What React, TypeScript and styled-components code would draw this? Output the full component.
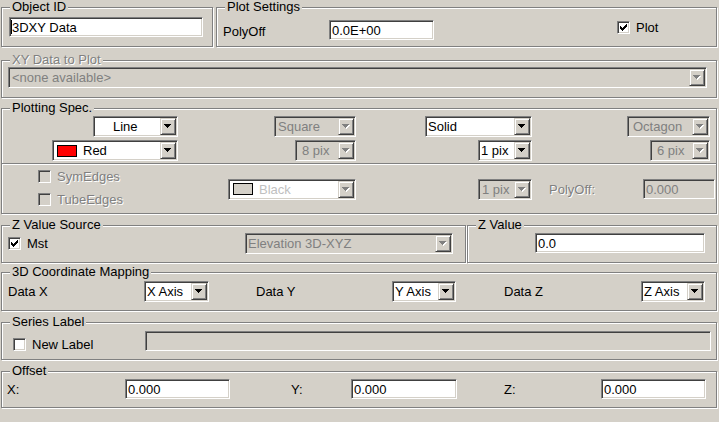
import * as React from "react";
import styled, { createGlobalStyle, css } from "styled-components";

const GlobalStyle = createGlobalStyle`
  html, body {
    margin: 0;
    padding: 0;
    background: #d4d0c8;
  }
  body {
    font-family: "Liberation Sans", Arial, sans-serif;
    font-size: 13px;
    color: #000;
  }
  * {
    box-sizing: border-box;
  }
`;

const sunken = css`
  border: 1px solid;
  border-color: #808080 #fff #fff #808080;
  box-shadow: inset 1px 1px 0 #404040, inset -1px -1px 0 #d4d0c8;
`;

const embossed = css`
  color: #808080;
  text-shadow: 1px 1px 0 #fff;
`;

const Dialog = styled.div`
  width: 719px;
  height: 422px;
  padding: 7px 0 0 1px;
  display: flex;
  flex-direction: column;
  overflow: hidden;
`;

const GroupRow = styled.div<{ $gap: number; $mt?: number }>`
  display: flex;
  gap: ${(p) => p.$gap}px;
  margin-top: ${(p) => p.$mt ?? 0}px;
`;

const Group = styled.div<{
  $w?: number;
  $h: number;
  $mt?: number;
  $pt?: number;
  $pl?: number;
  $pr?: number;
}>`
  position: relative;
  flex: none;
  width: ${(p) => p.$w ?? 716}px;
  height: ${(p) => p.$h}px;
  margin-top: ${(p) => p.$mt ?? 0}px;
  padding: ${(p) => p.$pt ?? 0}px ${(p) => p.$pr ?? 0}px 0 ${(p) => p.$pl ?? 0}px;
  border: 1px solid #808080;
  box-shadow: inset 1px 1px 0 #fff, 1px 1px 0 #fff;
  display: flex;
  flex-direction: column;
`;

const Title = styled.span<{ $disabled?: boolean }>`
  position: absolute;
  top: -8px;
  left: 8px;
  padding: 0 2px;
  line-height: 14px;
  background: #d4d0c8;
  white-space: nowrap;
  ${(p) => p.$disabled && embossed}
`;

const Line = styled.div<{ $h?: number; $mt?: number; $top?: boolean }>`
  display: flex;
  align-items: ${(p) => (p.$top ? "flex-start" : "center")};
  height: ${(p) => p.$h ?? 21}px;
  margin-top: ${(p) => p.$mt ?? 0}px;
  flex: none;
`;

const Cell = styled.div<{ $w: number }>`
  width: ${(p) => p.$w}px;
  flex: none;
  display: flex;
  justify-content: flex-end;
`;

const Label = styled.span<{ $w?: number; $ml?: number; $mt?: number; $disabled?: boolean }>`
  flex: none;
  width: ${(p) => (p.$w ? `${p.$w}px` : "auto")};
  margin-left: ${(p) => p.$ml ?? 0}px;
  margin-top: ${(p) => p.$mt ?? 0}px;
  line-height: 15px;
  white-space: nowrap;
  ${(p) => p.$disabled && embossed}
`;

const Edit = styled.div<{ $w: number; $ml?: string; $disabled?: boolean }>`
  ${sunken};
  width: ${(p) => p.$w}px;
  height: 20px;
  flex: none;
  margin-left: ${(p) => p.$ml ?? "0"};
  padding-left: 2px;
  display: flex;
  align-items: center;
  white-space: nowrap;
  overflow: hidden;
  background: ${(p) => (p.$disabled ? "#d4d0c8" : "#fff")};
  color: ${(p) => (p.$disabled ? "#808080" : "#000")};
`;

const Caret = styled.span`
  width: 1px;
  height: 14px;
  margin-left: -1px;
  background: #000;
  flex: none;
`;

const ComboBox = styled.div<{ $w: number; $ml?: string }>`
  ${sunken};
  width: ${(p) => p.$w}px;
  height: 21px;
  flex: none;
  margin-left: ${(p) => p.$ml ?? "0"};
  padding: 1px;
  display: flex;
`;

const ComboField = styled.div<{ $bg: string; $color: string; $pad: number }>`
  flex: 1;
  min-width: 0;
  display: flex;
  align-items: center;
  padding-left: ${(p) => p.$pad}px;
  background: ${(p) => p.$bg};
  color: ${(p) => p.$color};
  white-space: nowrap;
  overflow: hidden;
`;

const DropButton = styled.div`
  width: 16px;
  flex: none;
  display: flex;
  align-items: center;
  justify-content: center;
  background: #d4d0c8;
  border: 1px solid;
  border-color: #d4d0c8 #404040 #404040 #d4d0c8;
  box-shadow: inset 1px 1px 0 #fff, inset -1px -1px 0 #808080;
`;

const Swatch = styled.span<{ $fill: string; $edge: string }>`
  width: 20px;
  height: 12px;
  flex: none;
  margin: 0 6px 0 2px;
  background: ${(p) => p.$fill};
  border: 1px solid ${(p) => p.$edge};
`;

const CheckItem = styled.div<{ $mt?: number; $ml?: number; $h?: number }>`
  display: flex;
  align-items: center;
  gap: 6px;
  flex: none;
  height: ${(p) => (p.$h ? `${p.$h}px` : "auto")};
  margin-top: ${(p) => p.$mt ?? 0}px;
  margin-left: ${(p) => p.$ml ?? 0}px;
  line-height: 15px;
`;

const Box = styled.span<{ $disabled?: boolean }>`
  ${sunken};
  width: 13px;
  height: 13px;
  flex: none;
  display: flex;
  align-items: center;
  justify-content: center;
  background: ${(p) => (p.$disabled ? "#d4d0c8" : "#fff")};
`;

const Divider = styled.div<{ $mt: number }>`
  height: 2px;
  flex: none;
  margin-top: ${(p) => p.$mt}px;
  border-top: 1px solid #808080;
  border-bottom: 1px solid #fff;
`;

const LowerSpec = styled.div`
  display: flex;
  align-items: center;
  height: 48px;
`;

const CheckColumn = styled.div`
  width: 226px;
  flex: none;
  align-self: flex-start;
  padding-left: 36px;
  display: flex;
  flex-direction: column;
`;

const Spacer = styled.div<{ $w: number }>`
  width: ${(p) => p.$w}px;
  flex: none;
`;

function Arrow({ disabled }: { disabled?: boolean }) {
  return (
    <svg width="8" height="5" viewBox="0 0 8 5" shapeRendering="crispEdges">
      {disabled && (
        <path d="M1 1h7v1H1z M2 2h5v1H2z M3 3h3v1H3z M4 4h1v1H4z" fill="#fff" />
      )}
      <path
        d="M0 0h7v1H0z M1 1h5v1H1z M2 2h3v1H2z M3 3h1v1H3z"
        fill={disabled ? "#808080" : "#000"}
      />
    </svg>
  );
}

function CheckMark() {
  return (
    <svg width="7" height="7" viewBox="0 0 7 7" shapeRendering="crispEdges">
      <path
        d="M6 0h1v1H6z M5 1h2v1H5z M0 2h1v1H0z M4 2h3v1H4z M0 3h2v1H0z M3 3h3v1H3z M0 4h5v1H0z M1 5h3v1H1z M2 6h1v1H2z"
        fill="#000"
      />
    </svg>
  );
}

interface ComboProps {
  w: number;
  text: string;
  ml?: string;
  pad?: number;
  disabled?: boolean;
  white?: boolean;
  swatch?: { fill: string; edge: string };
}

function Combo({ w, text, ml, pad = 1, disabled, white, swatch }: ComboProps) {
  const bg = disabled && !white ? "#d4d0c8" : "#fff";
  const color = disabled ? (white ? "#c0c0c0" : "#808080") : "#000";
  return (
    <ComboBox $w={w} $ml={ml}>
      <ComboField $bg={bg} $color={color} $pad={pad}>
        {swatch && <Swatch $fill={swatch.fill} $edge={swatch.edge} />}
        {text}
      </ComboField>
      <DropButton>
        <Arrow disabled={disabled} />
      </DropButton>
    </ComboBox>
  );
}

interface CheckProps {
  label: string;
  checked?: boolean;
  disabled?: boolean;
  mt?: number;
  ml?: number;
  h?: number;
}

function Check({ label, checked, disabled, mt, ml, h }: CheckProps) {
  return (
    <CheckItem $mt={mt} $ml={ml} $h={h}>
      <Box $disabled={disabled}>{checked && <CheckMark />}</Box>
      <Label $disabled={disabled}>{label}</Label>
    </CheckItem>
  );
}

export default function App() {
  return (
    <>
      <GlobalStyle />
      <Dialog>
        <GroupRow $gap={3}>
          <Group $w={212} $h={40} $pt={9} $pl={7}>
            <Title>Object ID</Title>
            <Edit $w={194}>
              <Caret />
              3DXY Data
            </Edit>
          </Group>
          <Group $w={501} $h={40} $pt={12} $pl={6}>
            <Title>Plot Settings</Title>
            <Line $h={20} $top>
              <Label $w={106} $mt={4}>
                PolyOff
              </Label>
              <Edit $w={105}>0.0E+00</Edit>
              <Check label="Plot" checked ml={183} />
            </Line>
          </Group>
        </GroupRow>

        <Group $h={38} $mt={13} $pt={6} $pl={6}>
          <Title $disabled>XY Data to Plot</Title>
          <Combo w={699} text="<none available>" pad={2} disabled />
        </Group>

        <Group $h={106} $mt={10} $pt={7}>
          <Title>Plotting Spec.</Title>
          <Line>
            <Cell $w={176}>
              <Combo w={85} text="Line" pad={18} />
            </Cell>
            <Cell $w={178}>
              <Combo w={82} text="Square" pad={2} disabled />
            </Cell>
            <Cell $w={176}>
              <Combo w={107} text="Solid" />
            </Cell>
            <Cell $w={178}>
              <Combo w={83} text="Octagon" pad={4} disabled />
            </Cell>
          </Line>
          <Line $mt={3}>
            <Cell $w={176}>
              <Combo w={126} text="Red" swatch={{ fill: "#ff0000", edge: "#000" }} />
            </Cell>
            <Cell $w={178}>
              <Combo w={61} text="8 pix" pad={5} disabled />
            </Cell>
            <Cell $w={176}>
              <Combo w={54} text="1 pix" />
            </Cell>
            <Cell $w={178}>
              <Combo w={60} text="6 pix" pad={5} disabled />
            </Cell>
          </Line>
          <Divider $mt={2} />
          <LowerSpec>
            <CheckColumn>
              <Check label="SymEdges" disabled h={23} />
              <Check label="TubeEdges" disabled h={23} />
            </CheckColumn>
            <Combo
              w={128}
              text="Black"
              pad={1}
              disabled
              white
              swatch={{ fill: "#d4d0c8", edge: "#000" }}
            />
            <Spacer $w={122} />
            <Combo w={54} text="1 pix" pad={2} disabled />
            <Label $w={94} $ml={17} $disabled>
              PolyOff:
            </Label>
            <Edit $w={72} $disabled>
              0.000
            </Edit>
          </LowerSpec>
        </Group>

        <GroupRow $gap={1} $mt={11}>
          <Group $w={465} $h={38} $pt={7} $pl={6} $pr={12}>
            <Title>Z Value Source</Title>
            <Line>
              <Check label="Mst" checked />
              <Combo w={208} text="Elevation 3D-XYZ" disabled ml="auto" />
            </Line>
          </Group>
          <Group $w={250} $h={38} $pt={7} $pl={67}>
            <Title>Z Value</Title>
            <Edit $w={170}>0.0</Edit>
          </Group>
        </GroupRow>

        <Group $h={39} $mt={9} $pt={8} $pl={6}>
          <Title>3D Coordinate Mapping</Title>
          <Line>
            <Label $w={136}>Data X</Label>
            <Combo w={65} text="X Axis" />
            <Label $w={136} $ml={47}>
              Data Y
            </Label>
            <Combo w={64} text="Y Axis" />
            <Label $w={137} $ml={48}>
              Data Z
            </Label>
            <Combo w={64} text="Z Axis" />
          </Line>
        </Group>

        <Group $h={38} $mt={11} $pt={8} $pl={11} $pr={5}>
          <Title>Series Label</Title>
          <Line $h={20} $top>
            <Check label="New Label" mt={6} />
            <Edit $w={566} $ml="auto" $disabled />
          </Line>
        </Group>

        <Group $h={37} $mt={11} $pt={7} $pl={5}>
          <Title>Offset</Title>
          <Line $h={20}>
            <Label $w={118}>X:</Label>
            <Edit $w={105}>0.000</Edit>
            <Label $w={60} $ml={61}>
              Y:
            </Label>
            <Edit $w={106}>0.000</Edit>
            <Label $w={97} $ml={47}>
              Z:
            </Label>
            <Edit $w={105}>0.000</Edit>
          </Line>
        </Group>
      </Dialog>
    </>
  );
}
